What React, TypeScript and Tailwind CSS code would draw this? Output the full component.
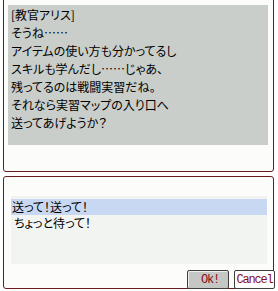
import React from "react";

export default function App() {
  const lines = [
    "[教官アリス]",
    "そうね……",
    "アイテムの使い方も分かってるし",
    "スキルも学んだし……じゃあ、",
    "残ってるのは戦闘実習だね。",
    "それなら実習マップの入り口へ",
    "送ってあげようか？",
  ];
  return (
    <div
      className="relative w-[278px] h-[291px] overflow-hidden bg-white flex flex-col text-black"
      style={{ fontFamily: '"Noto Sans CJK JP", "Noto Sans", sans-serif' }}
    >
      <div className="mt-[-8px] ml-[3px] w-[271px] h-[180px] border border-[#6a1a1c] rounded-[3px] bg-[#fcfdfb] pt-[12px] pl-[4px] pr-[5px] pb-[26px] flex">
        <div className="flex-1 bg-[#caceca] pl-[3px] pt-[1px] text-[12px] leading-[18px] [font-feature-settings:'palt']">
          {lines.map((l, i) => (
            <div key={i}>{l}</div>
          ))}
        </div>
      </div>
      <div className="mt-[4px] ml-[3px] w-[271px] h-[113px] border border-[#6a1a1c] rounded-[3px] bg-[#fcfdfb] pt-[19px] pl-[7px] pr-[6px]">
        <div className="h-[68px] bg-[#f1f4f1] pt-[3px] text-[12px] [font-feature-settings:'palt']">
          <div className="h-[16px] leading-[16px] bg-[#c9d8f2] pl-[1px]">送って！送って！</div>
          <div className="h-[16px] leading-[16px] pl-[3px]">ちょっと待って！</div>
        </div>
      </div>
      <div className="absolute left-[187px] top-[270px] flex gap-[5px]">
        <div
          className="w-[42px] h-[19px] border border-[#3e3e3e] rounded-[2px] bg-[#c5c7c5] flex items-center justify-end pr-[9px] text-[12px] tracking-[-1.2px] text-[#860c16] shadow-[inset_1px_1px_0_#eeeeee]"
          style={{ fontFamily: '"Liberation Mono", monospace' }}
        >
          Ok!
        </div>
        <div
          className="w-[41px] h-[19px] border border-[#3e3e3e] rounded-[2px] bg-white flex items-center justify-center text-[12px] tracking-[-1.2px] text-[#860c16]"
          style={{ fontFamily: '"Liberation Mono", monospace' }}
        >
          Cancel
        </div>
      </div>
    </div>
  );
}
